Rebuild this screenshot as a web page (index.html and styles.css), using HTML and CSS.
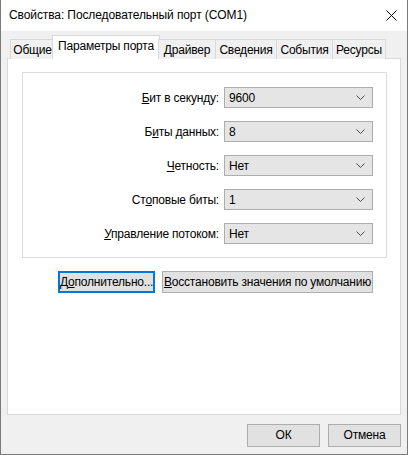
FILE: index.html
```html
<!DOCTYPE html>
<html lang="ru">
<head>
<meta charset="utf-8">
<title>Свойства: Последовательный порт (COM1)</title>
<link rel="stylesheet" href="styles.css">
</head>
<body>
<div class="window">
  <div class="titlebar">
    <span class="title">Свойства: Последовательный порт (COM1)</span>
    <svg class="close" width="11" height="11" viewBox="0 0 11 11"><path d="M0.5 0.5 L10.5 10.5 M10.5 0.5 L0.5 10.5" stroke="#000" stroke-width="1" fill="none"/></svg>
  </div>
  <div class="content">
    <div class="tabs">
      <div class="tab t1">Общие</div>
      <div class="tab t2 active">Параметры порта</div>
      <div class="tab t3">Драйвер</div>
      <div class="tab t4">Сведения</div>
      <div class="tab t5">События</div>
      <div class="tab t6">Ресурсы</div>
    </div>
    <div class="panel">
      <div class="group">
        <label class="lbl"><u>Б</u>ит в секунду:</label>
        <div class="combo"><span>9600</span><svg class="chev" width="9" height="5" viewBox="0 0 9 5"><path d="M0.5 0.5 L4.5 4.5 L8.5 0.5" stroke="#4a4a4a" fill="none"/></svg></div>
        <label class="lbl">Б<u>и</u>ты данных:</label>
        <div class="combo"><span>8</span><svg class="chev" width="9" height="5" viewBox="0 0 9 5"><path d="M0.5 0.5 L4.5 4.5 L8.5 0.5" stroke="#4a4a4a" fill="none"/></svg></div>
        <label class="lbl"><u>Ч</u>етность:</label>
        <div class="combo"><span>Нет</span><svg class="chev" width="9" height="5" viewBox="0 0 9 5"><path d="M0.5 0.5 L4.5 4.5 L8.5 0.5" stroke="#4a4a4a" fill="none"/></svg></div>
        <label class="lbl">Ст<u>о</u>повые биты:</label>
        <div class="combo"><span>1</span><svg class="chev" width="9" height="5" viewBox="0 0 9 5"><path d="M0.5 0.5 L4.5 4.5 L8.5 0.5" stroke="#4a4a4a" fill="none"/></svg></div>
        <label class="lbl"><u>У</u>правление потоком:</label>
        <div class="combo"><span>Нет</span><svg class="chev" width="9" height="5" viewBox="0 0 9 5"><path d="M0.5 0.5 L4.5 4.5 L8.5 0.5" stroke="#4a4a4a" fill="none"/></svg></div>
      </div>
      <div class="actions">
        <button class="btn btn-adv focused">Д<u>о</u>полнительно...</button>
        <button class="btn btn-reset"><u>В</u>осстановить значения по умолчанию</button>
      </div>
    </div>
    <div class="footer">
      <button class="btn btn-dlg">ОК</button>
      <button class="btn btn-dlg">Отмена</button>
    </div>
  </div>
</div>
</body>
</html>
```

FILE: styles.css
```css
* { box-sizing: border-box; }
html, body { margin: 0; padding: 0; }
body {
  width: 408px;
  height: 455px;
  background: #f0f0f0;
  font-family: "Liberation Sans", Arial, sans-serif;
  font-size: 12px;
  letter-spacing: -0.2px;
  color: #000;
  overflow: hidden;
}
.window {
  width: 408px;
  height: 455px;
  border: 1px solid #7a7a7a;
  border-top: none;
  display: flex;
  flex-direction: column;
  background: #f0f0f0;
}
.titlebar {
  height: 31px;
  background: #fff;
  display: flex;
  align-items: center;
  justify-content: space-between;
  padding: 0 10px 1px 8px;
  flex: none;
}
.title { font-size: 12px; letter-spacing: -0.1px; }
.close { display: block; margin-top: 1px; }
.content {
  flex: 1;
  display: flex;
  flex-direction: column;
  padding: 6px 6px 0 6px;
}
.tabs {
  height: 22px;
  display: flex;
  align-items: flex-end;
  padding-left: 3px;
  position: relative;
  z-index: 1;
  margin-bottom: -1px;
  flex: none;
}
.tab {
  height: 20px;
  border: 1px solid #d9d9d9;
  border-bottom: none;
  background: #f0f0f0;
  margin-left: -1px;
  display: flex;
  align-items: center;
  justify-content: center;
  padding-top: 1px;
  white-space: nowrap;
}
.tab.t1 { margin-left: 0; width: 45px; }
.tab.t2 { width: 104px; }
.tab.t3 { width: 58px; }
.tab.t4 { width: 62px; }
.tab.t5 { width: 57px; }
.tab.t6 { width: 54px; }
.tab.active {
  height: 24px;
  background: #fff;
  margin-left: -3px;
  margin-right: -2px;
  width: 108px;
  align-items: flex-start;
  padding-top: 3px;
}
.tab.active + .tab { margin-left: 0; }
.panel {
  height: 357px;
  flex: none;
  border: 1px solid #d9d9d9;
  background: #fff;
  padding: 13px 13px 0 14px;
  display: flex;
  flex-direction: column;
}
.group {
  height: 186px;
  border: 1px solid #dcdcdc;
  display: grid;
  grid-template-columns: 196px 149px;
  grid-auto-rows: 21px;
  row-gap: 13px;
  column-gap: 5px;
  align-items: center;
  align-content: start;
  padding-top: 14px;
}
.lbl {
  text-align: right;
  white-space: nowrap;
}
.combo {
  height: 21px;
  background: #e5e5e5;
  border: 1px solid #adadad;
  display: flex;
  align-items: center;
  justify-content: space-between;
  padding: 0 7px 0 4px;
}
.chev { display: block; }
.actions {
  display: flex;
  gap: 7px;
  margin-top: 13px;
  padding-left: 36px;
}
.btn {
  font-family: inherit;
  font-size: 12px;
  letter-spacing: -0.2px;
  color: #000;
  height: 22px;
  line-height: 18px;
  background: #e1e1e1;
  border: 1px solid #adadad;
  padding: 0;
  margin: 0;
  display: block;
  text-align: center;
  white-space: nowrap;
}
.btn.focused { border: 2px solid #0078d7; line-height: 16px; }
.btn-adv { width: 97px; }
.btn-reset { width: 211px; }
.footer {
  display: flex;
  justify-content: flex-end;
  gap: 8px;
  margin-top: 9px;
}
.btn-dlg { width: 73px; height: 23px; line-height: 19px; }
```
